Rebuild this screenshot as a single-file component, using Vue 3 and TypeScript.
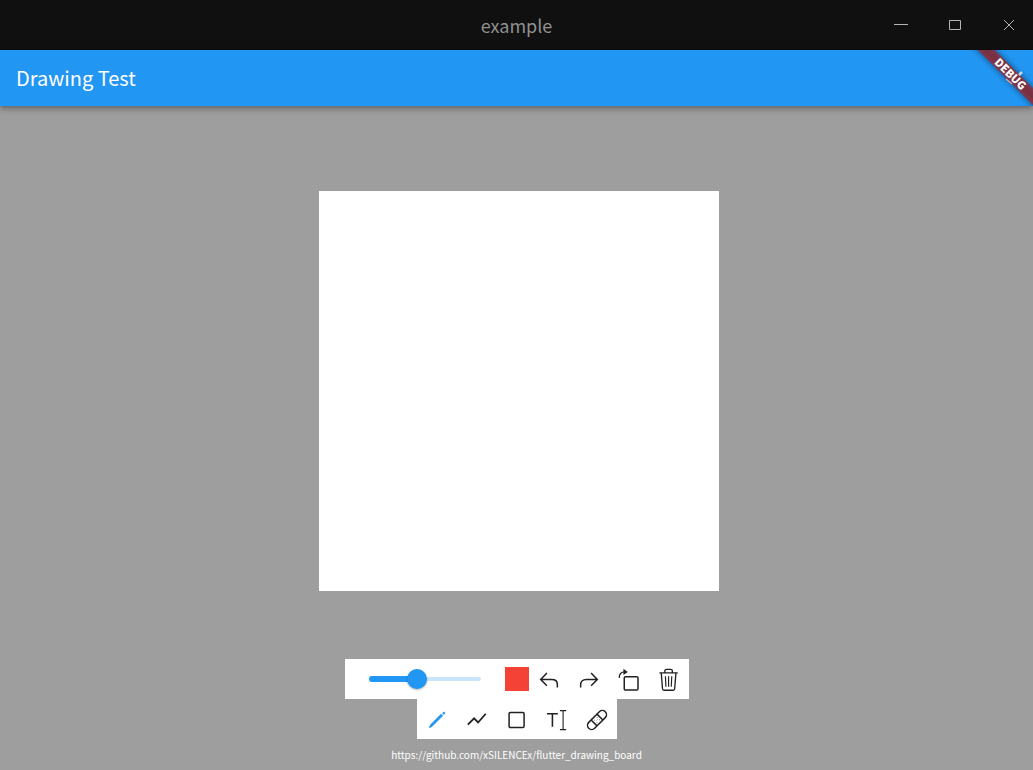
<script setup lang="ts">
import { ref } from 'vue'

const stroke = ref(48)
const tool = ref('pencil')
const color = ref('#f44336')
</script>

<template>
  <div class="window">
    <header class="titlebar">
      <span class="side"></span>
      <span class="caption">example</span>
      <div class="side controls">
        <button aria-label="Minimize"><svg width="16" height="16" viewBox="0 0 16 16"><path d="M1 7.5H15" /></svg></button>
        <button aria-label="Maximize"><svg width="16" height="16" viewBox="0 0 16 16"><path d="M2.5 3.5H13.5V12.5H2.5Z" /></svg></button>
        <button aria-label="Close"><svg width="16" height="16" viewBox="0 0 16 16"><path d="M3 3L13 13M13 3L3 13" /></svg></button>
      </div>
    </header>
    <div class="appbar">
      <h1>Drawing Test</h1>
      <svg class="banner" width="72" height="56" viewBox="0 0 72 56">
        <defs>
          <filter id="soft" x="-30%" y="-200%" width="160%" height="500%"><feGaussianBlur stdDeviation="3" /></filter>
        </defs>
        <g class="ribbon" transform="translate(72 0) rotate(45)">
          <rect x="-60" y="27" width="120" height="12" fill="#000" fill-opacity=".5" filter="url(#soft)" />
          <rect x="-60" y="27" width="120" height="12" fill="#b71c1c" fill-opacity=".63" />
        </g>
        <path d="M45 29l6 5" stroke="#d8a4a4" stroke-width="1.5" />
        <path d="M58 25l3-3" stroke="#c9d5e0" stroke-width="2.5" />
        <g class="ribbon" transform="translate(72 0) rotate(45)">
          <text x="1" y="37" text-anchor="middle">DEBUG</text>
        </g>
      </svg>
    </div>
    <main class="stage"><div class="board"></div></main>
    <footer>
      <div class="bar">
        <label class="slider">
          <span class="track"><span class="rest"></span><span class="fill" :style="{ width: (stroke / 112) * 100 + '%' }"></span></span>
          <input v-model.number="stroke" type="range" min="0" max="112" aria-label="Stroke width" />
        </label>
        <button class="swatch" aria-label="Colour" :style="{ background: color }"></button>
        <button class="tool" aria-label="Undo">
          <svg viewBox="0 0 24 24"><path d="M9.5 3.5L2 11.5L9.500 19M2 11.5H15C20 11.5 22 14 22 17V21" /></svg>
        </button>
        <button class="tool" aria-label="Redo">
          <svg viewBox="0 0 24 24"><path d="M14.5 3.5L22 11.5L14.500 19M22 11.5H9C4 11.5 2 14 2 17V21" /></svg>
        </button>
        <button class="tool" aria-label="Rotate">
          <svg viewBox="0 0 24 24"><rect x="6.300" y="8" width="16.500" height="16" rx="1.500" /><path d="M0.300 9.500C0 5 2.500 2.300 7 2.300" stroke-width="1.500" /><path d="M5.300 -1.500L10.500 2.300L5.300 6Z" fill="currentColor" stroke="none" /></svg>
        </button>
        <button class="tool" aria-label="Clear">
          <svg viewBox="0 0 24 24"><path d="M0.500 3.500H22.500M2.700 3.500L4.200 22.500Q4.400 24.300 6 24.300H17Q18.600 24.300 18.800 22.500L20.300 3.500M7 3V1Q7 -0.800 9 -0.800H14Q16 -0.800 16 1V3" stroke-width="1.600" /><path d="M7.700 7.500L8.300 20M11.500 7.500V20M15.300 7.500L14.700 20" stroke-width="1.400" /></svg>
        </button>
      </div>
      <div class="bar">
        <button class="tool" :class="{ active: tool === 'pencil' }" aria-label="Pencil" @click="tool = 'pencil'">
          <svg viewBox="0 0 24 24"><path d="M2.500 21.500L4 17.800L17 4.800L19 6.800L6 19.800Z" fill="currentColor" stroke-width=".6" /><path d="M19.200 2.800L21.200 4.800" stroke-width="2.800" /></svg>
        </button>
        <button class="tool" :class="{ active: tool === 'line' }" aria-label="Line" @click="tool = 'line'">
          <svg viewBox="0 0 24 24"><path d="M1 17.500L8.500 10L13.300 15L22.500 4.500" stroke-width="2.200" /></svg>
        </button>
        <button class="tool" :class="{ active: tool === 'square' }" aria-label="Rectangle" @click="tool = 'square'">
          <svg viewBox="0 0 24 24"><rect x="2.500" y="3" width="18" height="18" rx="1.500" /></svg>
        </button>
        <button class="tool" :class="{ active: tool === 'text' }" aria-label="Text" @click="tool = 'text'">
          <svg viewBox="0 0 24 24"><path d="M0 4.500H13M6.500 4.500V20" stroke-width="1.900" /><path d="M15.500 0.700H23M19.300 0.700V23.500M15.500 23.500H23" stroke-width="1.300" /></svg>
        </button>
        <button class="tool" :class="{ active: tool === 'eraser' }" aria-label="Eraser" @click="tool = 'eraser'">
          <svg viewBox="0 0 24 24">
            <g transform="rotate(-45 12 12)"><rect x="-2" y="7" width="28" height="10" rx="5" /><path d="M7 7V17M17 7V17" /><path d="M9.500 10H10.500M13.500 10H14.500M11.500 12H12.500M9.500 14H10.500M13.500 14H14.500" stroke-width="1" /></g>
          </svg>
        </button>
      </div>
      <a href="https://github.com/xSILENCEx/flutter_drawing_board">https://github.com/xSILENCEx/flutter_drawing_board</a>
    </footer>
  </div>
</template>

<style>
body { margin: 0; background: #9e9e9e; }
</style>

<style scoped>
.window {
  display: flex;
  flex-direction: column;
  min-height: 100vh;
  overflow: hidden;
  background: #9e9e9e;
  font-family: "Noto Sans CJK SC", sans-serif;
}
button { padding: 0; border: 0; background: none; color: inherit; }
svg { display: block; fill: none; stroke: currentColor; }
.titlebar {
  display: flex;
  align-items: center;
  height: 50px;
  background: #101010;
  color: #919191;
}
.side { flex: 1; }
.caption { font-size: 18px; line-height: 28px; font-weight: 400; }
.controls { display: flex; justify-content: flex-end; gap: 14px; color: #b4b4b4; }
.controls button { display: grid; place-items: center; width: 40px; height: 40px; }
.controls button:last-child { margin-right: 4px; }
.appbar {
  position: relative;
  display: flex;
  align-items: center;
  height: 56px;
  padding: 0 16px;
  background: #2196f3;
  color: #fff;
  box-shadow: 0 2px 4px -1px rgba(0, 0, 0, .2), 0 4px 5px rgba(0, 0, 0, .14), 0 1px 10px rgba(0, 0, 0, .12);
}
h1 { margin: 0; font-size: 20px; line-height: 24px; font-weight: 400; }
.banner { position: absolute; top: 0; right: 0; overflow: hidden; }
.ribbon { stroke: none; }
.banner text { fill: #fff; font-size: 11px; font-weight: 900; }
.stage { flex: 1; display: grid; place-items: center; padding: 17px 0 0 5px; }
.board { width: 400px; height: 400px; background: #fff; }
footer { display: flex; flex-direction: column; align-items: center; }
.bar { display: flex; align-items: center; height: 40px; background: #fff; color: #212121; }
.slider { display: grid; align-items: center; width: 132px; height: 40px; padding: 0 14px; }
.slider > * { grid-area: 1 / 1; }
.track { display: grid; align-items: center; margin: 0 10px; }
.track > * { grid-area: 1 / 1; border-radius: 3px; }
.rest { height: 4px; background: #c8e5fc; }
.fill { height: 6px; background: #2196f3; }
input { appearance: none; width: 132px; height: 20px; margin: 0; background: none; }
input::-webkit-slider-thumb {
  appearance: none;
  width: 20px;
  height: 20px;
  border-radius: 50%;
  background: #2196f3;
  box-shadow: 0 1px 2px rgba(0, 0, 0, .3);
}
.swatch { width: 24px; height: 24px; }
.tool { display: grid; place-items: center; width: 40px; height: 40px; padding-top: 2px; }
.tool svg { width: 20px; height: 20px; stroke-width: 1.8; overflow: visible; }
.active { color: #2196f3; }
a { padding: 8px; color: #fff; font-size: 10px; line-height: 15px; font-weight: 400; text-decoration: none; }
</style>
